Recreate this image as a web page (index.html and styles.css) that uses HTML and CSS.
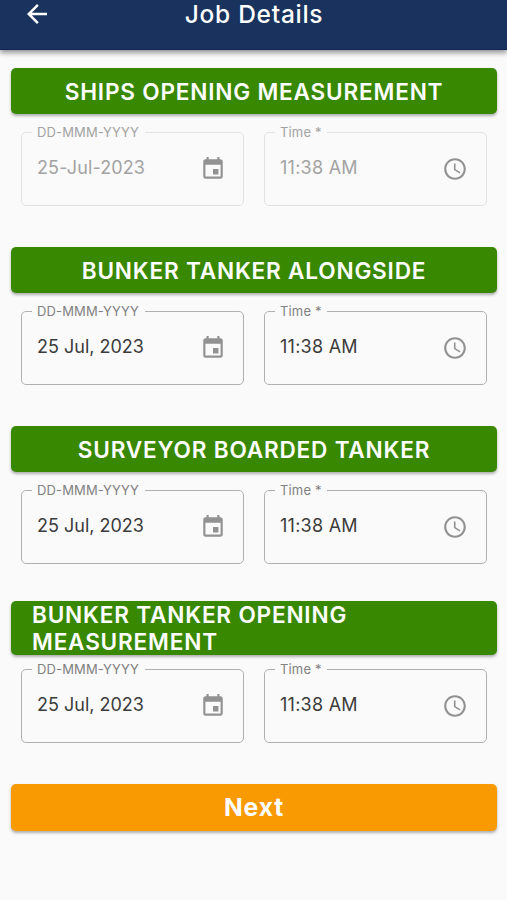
FILE: index.html
```html
<!DOCTYPE html>
<html lang="en">
<head>
<meta charset="utf-8">
<title>Job Details</title>
<link rel="stylesheet" href="styles.css">
</head>
<body>
<svg class="sprite" aria-hidden="true">
  <symbol id="calendar" viewBox="0 0 24 24"><path d="M17 12h-5v5h5v-5zM16 1v2H8V1H6v2H5c-1.11 0-1.99.9-1.99 2L3 19c0 1.1.89 2 2 2h14c1.1 0 2-.9 2-2V5c0-1.1-.9-2-2-2h-1V1h-2zm3 18H5V8h14v11z"/></symbol>
  <symbol id="clock" viewBox="0 0 24 24"><path d="M11.99 2C6.47 2 2 6.48 2 12s4.47 10 9.99 10C17.52 22 22 17.52 22 12S17.52 2 11.99 2zM12 20c-4.42 0-8-3.58-8-8s3.58-8 8-8 8 3.58 8 8-3.58 8-8 8zm.5-13H11v6l5.25 3.15.75-1.23-4.5-2.67z"/></symbol>
</svg>
<header class="appbar">
  <svg class="back" viewBox="0 0 24 24"><path d="M20 11H7.83l5.59-5.59L12 4l-8 8 8 8 1.41-1.41L7.83 13H20v-2z"/></svg>
  <h1 class="title"><span>Job Details</span></h1>
</header>
<main class="content">
  <section class="step">
    <div class="slot"><button class="btn"><span>SHIPS OPENING MEASUREMENT</span></button></div>
    <div class="fields disabled">
      <fieldset class="field"><legend class="date-label">DD-MMM-YYYY</legend><div class="row"><span class="value">25-Jul-2023</span><svg class="icon calendar"><use href="#calendar"/></svg></div></fieldset>
      <fieldset class="field"><legend class="time-label">Time *</legend><div class="row"><span class="value time">11:38 AM</span><svg class="icon"><use href="#clock"/></svg></div></fieldset>
    </div>
  </section>
  <section class="step">
    <div class="slot"><button class="btn"><span>BUNKER TANKER ALONGSIDE</span></button></div>
    <div class="fields">
      <fieldset class="field"><legend class="date-label">DD-MMM-YYYY</legend><div class="row"><span class="value">25 Jul, 2023</span><svg class="icon calendar"><use href="#calendar"/></svg></div></fieldset>
      <fieldset class="field"><legend class="time-label">Time *</legend><div class="row"><span class="value time">11:38 AM</span><svg class="icon"><use href="#clock"/></svg></div></fieldset>
    </div>
  </section>
  <section class="step">
    <div class="slot"><button class="btn"><span>SURVEYOR BOARDED TANKER</span></button></div>
    <div class="fields">
      <fieldset class="field"><legend class="date-label">DD-MMM-YYYY</legend><div class="row"><span class="value">25 Jul, 2023</span><svg class="icon calendar"><use href="#calendar"/></svg></div></fieldset>
      <fieldset class="field"><legend class="time-label">Time *</legend><div class="row"><span class="value time">11:38 AM</span><svg class="icon"><use href="#clock"/></svg></div></fieldset>
    </div>
  </section>
  <section class="step">
    <div class="slot"><button class="btn wrap"><span>BUNKER TANKER OPENING MEASUREMENT</span></button></div>
    <div class="fields">
      <fieldset class="field"><legend class="date-label">DD-MMM-YYYY</legend><div class="row"><span class="value">25 Jul, 2023</span><svg class="icon calendar"><use href="#calendar"/></svg></div></fieldset>
      <fieldset class="field"><legend class="time-label">Time *</legend><div class="row"><span class="value time">11:38 AM</span><svg class="icon"><use href="#clock"/></svg></div></fieldset>
    </div>
  </section>
  <button class="btn next"><span>Next</span></button>
</main>
</body>
</html>
```

FILE: styles.css
```css
* { box-sizing: border-box; }
body {
  margin: 0;
  height: 900px;
  overflow: hidden;
  background: #fafafa;
  font-family: Inter, "Liberation Sans", sans-serif;
}
.sprite { display: none; }
.appbar {
  height: 50px;
  padding: 0 24px;
  display: grid;
  grid-template-columns: 26px 1fr 26px;
  align-items: start;
  background: #1a335e;
  border-bottom: 1px solid #0d2655;
  box-shadow: 0 3px 5px rgba(0, 0, 0, .4);
}
.back { width: 30px; height: 30px; margin: -1px 0 0 -2px; fill: #fff; }
.title {
  margin: -1px 0 0 1px;
  text-align: center;
  color: #fff;
  font-size: 24.5px;
  font-weight: 450;
  line-height: 30px;
  letter-spacing: .72px;
}
.content {
  padding: 18px 10px 0 11px;
  display: flex;
  flex-direction: column;
}
.step { height: 179px; display: flex; flex-direction: column; gap: 11px; }
.slot { height: 46px; flex: none; display: flex; align-items: center; }
.btn {
  flex: none;
  width: 100%;
  min-height: 46.5px;
  padding: 0 21px;
  border: 0;
  border-radius: 5px;
  background: #398802;
  color: #fff;
  font: 600 22.6px/27px Inter, "Liberation Sans", sans-serif;
  letter-spacing: .8px;
  text-align: center;
  box-shadow: 0 2px 3px rgba(0, 0, 0, .3);
}
.btn.wrap { text-align: left; }
.fields {
  display: grid;
  grid-template-columns: 223px 223px;
  gap: 20px;
  padding-left: 10px;
}
.field {
  min-width: 0;
  height: 81px;
  margin: 0;
  padding: 0 18px 0 10px;
  border: 1.5px solid #b0b0b0;
  border-radius: 5px;
}
.field legend {
  height: 14px;
  margin: 0;
  padding: 0 0 0 5px;
  font-size: 13px;
  line-height: 14px;
  letter-spacing: .15px;
  color: #818181;
}
.date-label { width: 113px; }
.time-label { width: 52px; }
.row { height: 58px; padding-left: 5px; display: flex; align-items: center; justify-content: space-between; }
.value { font-size: 18px; line-height: 24px; letter-spacing: 0; color: #3c3c3c; }
.value.time { letter-spacing: .25px; }
.icon { width: 26px; height: 26px; margin-top: 2px; fill: #929292; }
.icon.calendar { margin-right: -1px; }
.disabled .field { border-color: #e2e2e2; }
.disabled legend, .disabled .value { color: #a3a3a3; }
.disabled .value:not(.time) { letter-spacing: .12px; }
.next { background: #fa9a02; font-size: 24.6px; font-weight: 700; letter-spacing: .9px; }
```
